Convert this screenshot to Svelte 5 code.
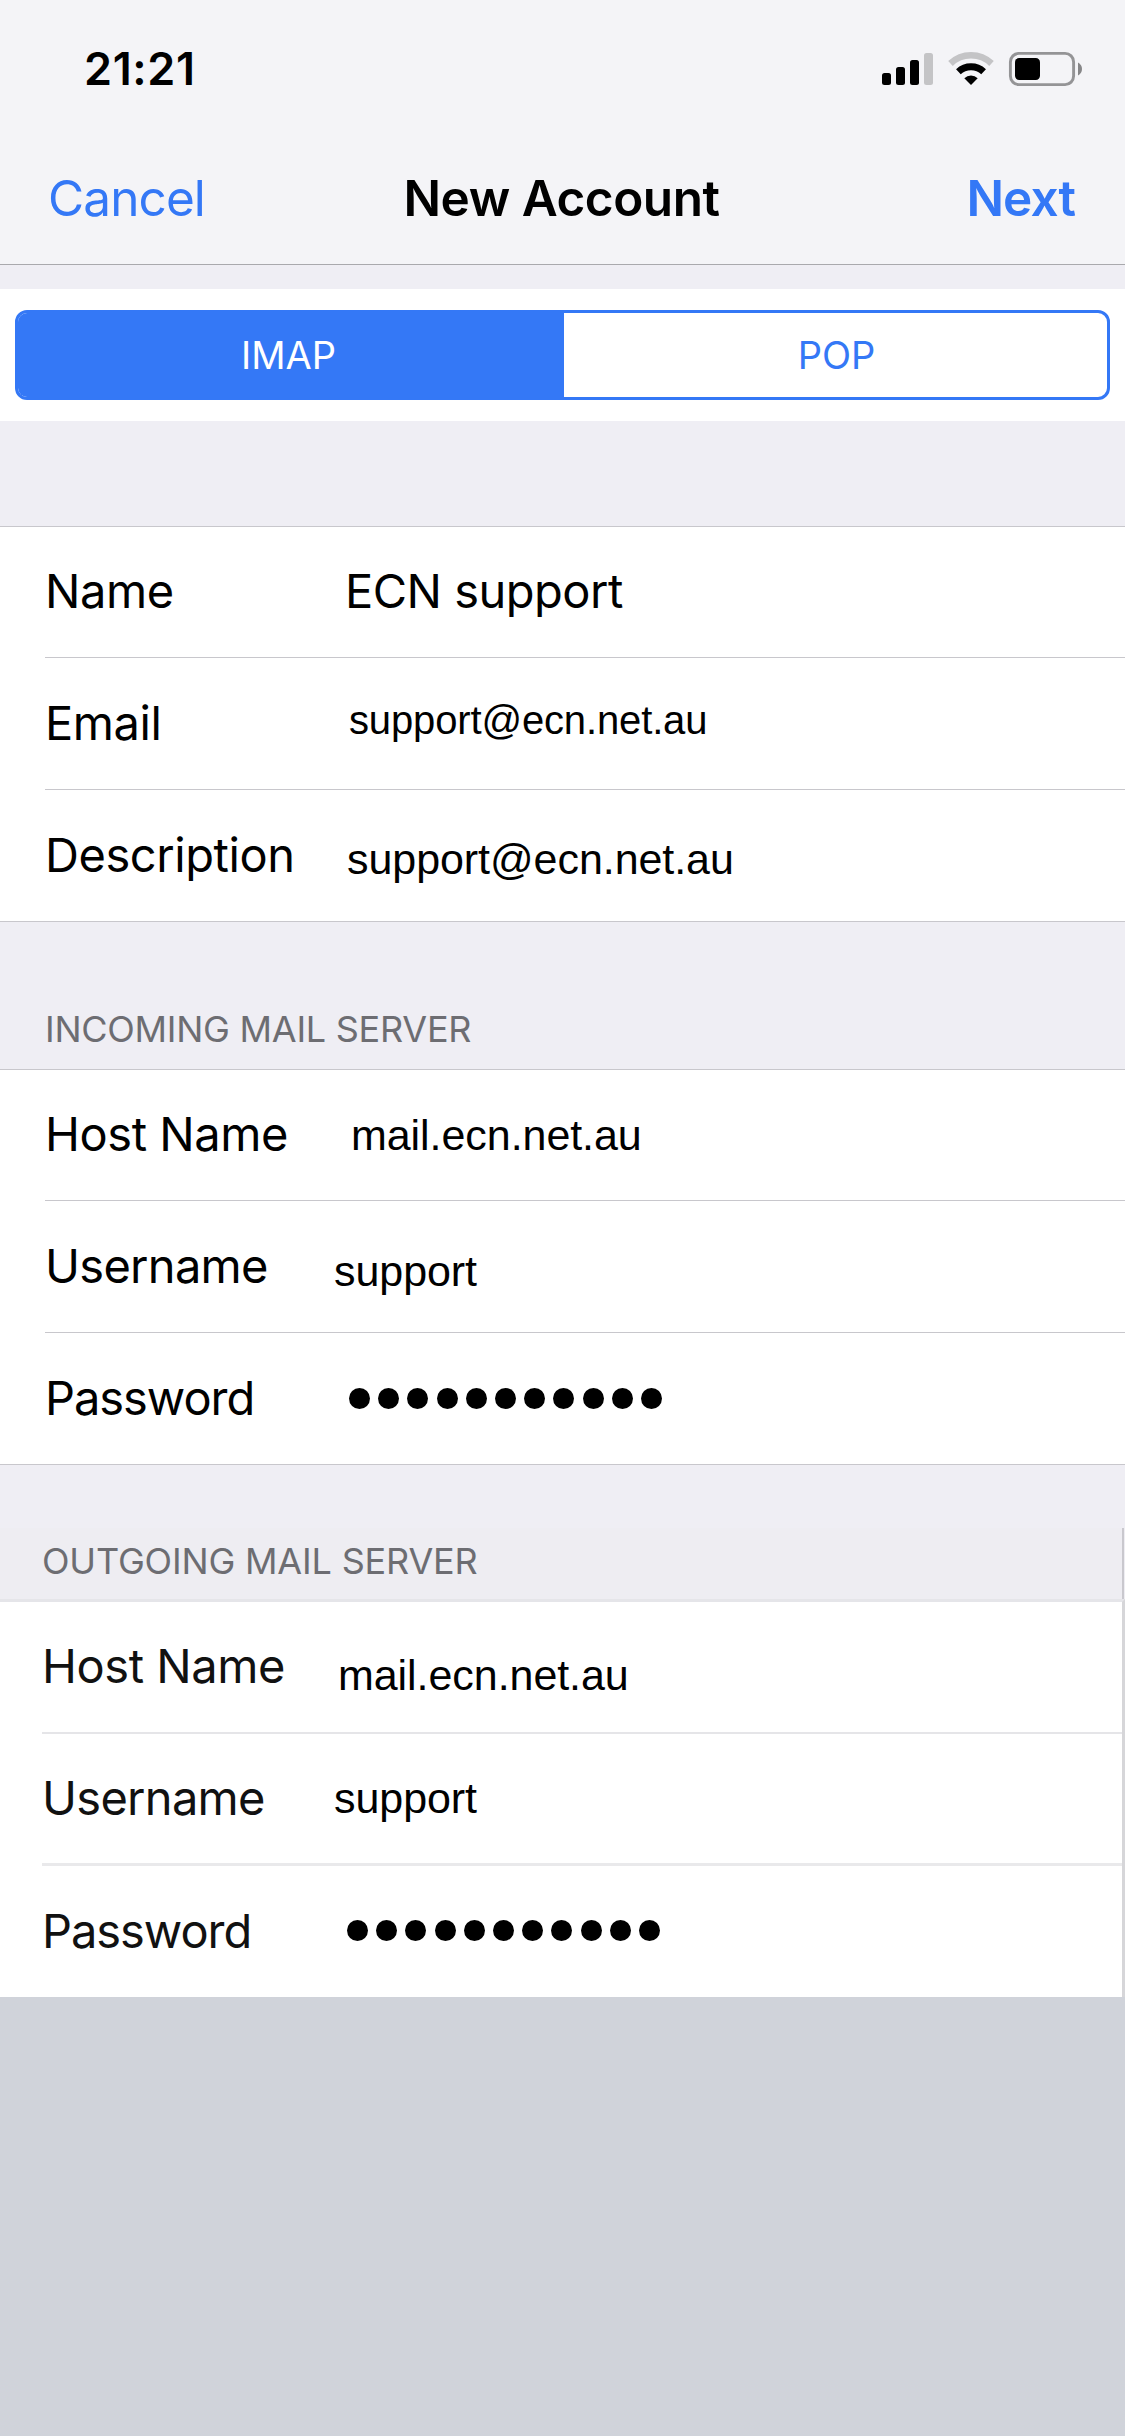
<script>
  const groups = [
    {
      id: 'identity',
      title: '',
      fields: [
        { label: 'Name', value: 'ECN support', kind: 'native' },
        { label: 'Email', value: 'support@ecn.net.au', kind: 'email' },
        { label: 'Description', value: 'support@ecn.net.au', kind: 'description' }
      ]
    },
    {
      id: 'incoming',
      title: 'INCOMING MAIL SERVER',
      fields: [
        { label: 'Host Name', value: 'mail.ecn.net.au', kind: 'host' },
        { label: 'Username', value: 'support', kind: 'user' },
        { label: 'Password', secret: 11, kind: 'password' }
      ]
    },
    {
      id: 'outgoing',
      title: 'OUTGOING MAIL SERVER',
      fields: [
        { label: 'Host Name', value: 'mail.ecn.net.au', kind: 'host' },
        { label: 'Username', value: 'support', kind: 'user' },
        { label: 'Password', secret: 11, kind: 'password' }
      ]
    }
  ];
</script>

<main class="screen">
  <header class="top">
    <div class="status">
      <span class="time">21:21</span>
      <svg class="indicators" width="204" height="40" viewBox="880 49 204 40">
        <rect x="882" y="73" width="9" height="12" rx="2.5" />
        <rect x="896" y="67" width="9" height="18" rx="2.5" />
        <rect x="910" y="60" width="9" height="25" rx="2.5" />
        <rect x="924" y="53" width="9" height="32" rx="2.5" fill="#c4c4c6" />
        <path d="M950.5 63.500A29.700 29.700 0 0 1 991.500 63.500" fill="none" stroke="#c4c4c6" stroke-width="6.6" />
        <path d="M958.4 71.800A18.300 18.300 0 0 1 983.600 71.800" fill="none" stroke="#000" stroke-width="6.8" />
        <path d="M971 85L964.3 78.2A9.7 9.7 0 0 1 977.7 78.2Z" />
        <rect x="1010.4" y="53.4" width="63.2" height="31.2" rx="8.5" fill="none" stroke="#949496" stroke-width="2.9" />
        <rect x="1015" y="58" width="25" height="22" rx="4.2" />
        <path d="M1078 62.5C1080.6 64 1082 66.200 1082 69S1080.600 74 1078 75.500Z" fill="#868688" />
      </svg>
    </div>
    <nav class="bar">
      <span class="cancel">Cancel</span>
      <h1>New Account</h1>
      <span class="next">Next</span>
    </nav>
  </header>

  <section class="protocol">
    <div class="segmented">
      <span class="segment active">IMAP</span>
      <span class="segment">POP</span>
    </div>
  </section>

  {#each groups as group (group.id)}
    <section class="group {group.id}">
      <h2>{group.title}</h2>
      <div class="fields">
        {#each group.fields as field (field.label)}
          <div class="row {field.kind}">
            <span class="label">{field.label}</span>
            {#if field.secret}
              <span class="dots">
                {#each Array(field.secret) as _}<i></i>{/each}
              </span>
            {:else}
              <span class="value">{field.value}</span>
            {/if}
          </div>
        {/each}
      </div>
    </section>
  {/each}
</main>

<style>
  :global(body) {
    margin: 0;
    background: #d0d3da;
  }
  .screen {
    width: 1125px;
    height: 2436px;
    overflow: hidden;
    background: #d0d3da;
    color: #000;
    font-family: Inter, 'Liberation Sans', sans-serif;
  }
  .top {
    box-sizing: border-box;
    height: 265px;
    background: #f4f4f7;
    border-bottom: 1px solid #a9a9ad;
  }
  .status {
    display: flex;
    justify-content: space-between;
    align-items: center;
    height: 138px;
    padding: 0 41px 0 84px;
  }
  .time {
    font-size: 45px;
    font-weight: 600;
    line-height: 54px;
    letter-spacing: 0.64px;
    margin-bottom: 1px;
  }
  .indicators {
    display: block;
  }
  .bar {
    display: grid;
    grid-template-columns: 1fr auto 1fr;
    align-items: center;
    height: 120px;
    padding: 0 50px 0 48px;
    font-size: 49.5px;
    line-height: 60px;
    white-space: nowrap;
  }
  .cancel {
    color: #3478f6;
    letter-spacing: -0.9px;
  }
  .bar h1 {
    margin: 0;
    font-size: inherit;
    font-weight: 600;
    letter-spacing: -0.48px;
  }
  .next {
    color: #3478f6;
    font-weight: 600;
    letter-spacing: -0.92px;
    text-align: right;
  }
  .protocol {
    box-sizing: border-box;
    height: 156px;
    padding: 21px 15px;
    background: #fff;
    border-top: 24px solid #efeef4;
  }
  .segmented {
    box-sizing: border-box;
    display: grid;
    grid-template-columns: 546px 1fr;
    height: 90px;
    border: 3px solid #3478f6;
    border-radius: 12px;
    overflow: hidden;
  }
  .segment {
    display: flex;
    align-items: center;
    justify-content: center;
    color: #3478f6;
    font-size: 38px;
    padding-left: 2px;
  }
  .active {
    background: #3478f6;
    color: #fff;
    padding: 0 5px 0 0;
  }
  .group {
    background: #efeef4;
  }
  h2 {
    box-sizing: border-box;
    margin: 0;
    padding-left: 45px;
    color: #6d6d72;
    font-size: 36px;
    font-weight: 400;
    line-height: 44px;
    letter-spacing: -0.26px;
  }
  .identity h2 {
    height: 105px;
  }
  .incoming h2 {
    height: 147px;
    padding-top: 85px;
  }
  .fields {
    background: #fff;
    padding-left: 45px;
    border-top: 1px solid #c8c7cc;
    border-bottom: 1px solid #c8c7cc;
  }
  .row {
    box-sizing: border-box;
    display: flex;
    align-items: center;
    height: 132px;
    border-bottom: 1px solid #c8c7cc;
    white-space: nowrap;
  }
  .row:first-child {
    height: 131px;
  }
  .row:last-child {
    height: 131px;
    border-bottom: 0;
  }
  .label {
    flex: none;
    width: 300px;
    font-size: 47px;
    line-height: 60px;
    letter-spacing: -0.43px;
    margin-bottom: 2px;
  }
  .user .label {
    letter-spacing: -0.7px;
  }
  .password .label {
    letter-spacing: -1.05px;
  }
  .value {
    font-family: 'Liberation Sans', Arial, sans-serif;
    font-size: 43px;
    line-height: 60px;
    letter-spacing: -0.06px;
  }
  .native .value {
    font-family: Inter, sans-serif;
    font-size: 47px;
    letter-spacing: -0.5px;
    margin-bottom: 2px;
  }
  .email .value {
    font-size: 40px;
    letter-spacing: -0.14px;
    margin: 0 0 7px 4px;
  }
  .description .value {
    margin: 7px 0 0 2px;
  }
  .host .value {
    margin-left: 6px;
  }
  .user .value {
    margin: 9px 0 0 -11px;
  }
  .dots {
    display: flex;
    gap: 8.2px;
    margin: 0 0 1px 4px;
  }
  .dots i {
    width: 21px;
    height: 21px;
    border-radius: 50%;
    background: #000;
  }
  .outgoing {
    background: linear-gradient(#efeef4 63px, #eeedf2 63px);
  }
  .outgoing h2 {
    height: 134px;
    padding: 74px 0 0 42px;
    letter-spacing: -0.18px;
    background: linear-gradient(#c9c8ce, #c9c8ce) right 1px top 63px / 2px 71px no-repeat;
  }
  .outgoing .fields {
    padding-left: 42px;
    border-top: 3px solid #e5e5e9;
    border-bottom: 0;
    border-right: 3px solid #d6d6d9;
  }
  .outgoing .label {
    color: #111;
  }
  .outgoing .row {
    border-bottom: 2px solid #e5e5e8;
    height: 132px;
  }
  .outgoing .user {
    border-bottom: 3px solid #e9e9eb;
  }
  .outgoing .row:last-child {
    height: 131px;
    border-bottom: 0;
  }
  .outgoing .host .value {
    margin: 16px 0 0 -4px;
  }
  .outgoing .user .value {
    margin: 0 0 2px -8px;
  }
  .outgoing .dots {
    margin: 0 0 2px 5px;
  }
</style>
